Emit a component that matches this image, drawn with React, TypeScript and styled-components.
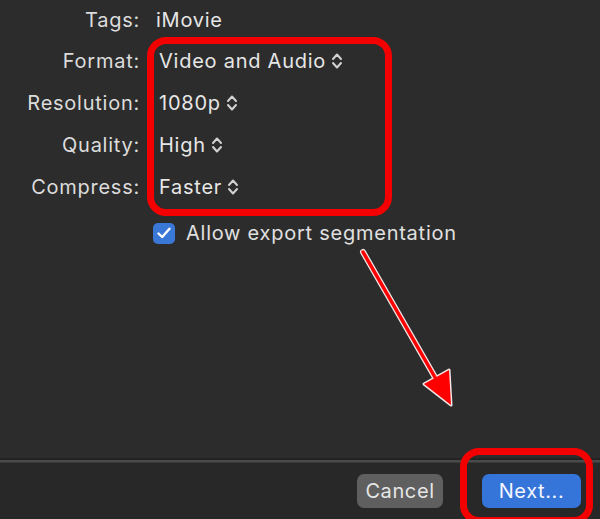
import { Fragment } from 'react';
import styled, { createGlobalStyle } from 'styled-components';

const GlobalStyle = createGlobalStyle`
  html, body {
    margin: 0;
    padding: 0;
    background: #2c2c2c;
  }
  body {
    font-family: Inter, "Liberation Sans", Arial, sans-serif;
  }
`;

const Sheet = styled.div`
  position: relative;
  width: 600px;
  height: 519px;
  overflow: hidden;
  display: flex;
  flex-direction: column;
  background: #2c2c2c;
  color: #e2e2e2;
  font-size: 20px;
  letter-spacing: 0.75px;
`;

const Form = styled.div`
  flex: 1;
  display: grid;
  grid-template-columns: 140px 1fr;
  grid-template-rows: 40px repeat(4, 42px);
  column-gap: 19px;
  align-items: center;
  align-content: start;
`;

const Label = styled.div`
  text-align: right;
  color: #dcdcdc;
`;

const Value = styled.div<{ $shift?: number }>`
  display: flex;
  align-items: center;
  gap: 5px;
  color: #e6e6e6;
  margin-left: ${(p) => p.$shift ?? 0}px;
`;

const CheckRow = styled.label`
  grid-column: 2;
  height: 50px;
  display: flex;
  align-items: center;
  gap: 11px;
  margin-left: -6px;
  color: #e0e0e0;
`;

const Box = styled.span`
  width: 22px;
  height: 21px;
  border-radius: 5px;
  background: #3a78d8;
  display: flex;
  align-items: center;
  justify-content: center;
`;

const Separator = styled.div`
  height: 2px;
  border-top: 2px solid #232323;
  background: #4a4a4a;
  border-bottom: 1px solid #3a3a3a;
`;

const Footer = styled.div`
  height: 56px;
  display: flex;
  align-items: center;
  justify-content: flex-end;
  gap: 39px;
  padding-right: 19px;
  background: #282828;
`;

const Button = styled.button<{ $primary?: boolean }>`
  height: 34px;
  padding: 0;
  width: ${(p) => (p.$primary ? 99 : 86)}px;
  border: none;
  border-radius: 7px;
  font-family: inherit;
  font-size: 20px;
  letter-spacing: 0.6px;
  color: ${(p) => (p.$primary ? '#f4f7ff' : '#e6e6e6')};
  background: ${(p) => (p.$primary ? '#3574d8' : '#5f5f5f')};
`;

const Marker = styled.div<{ $x: number; $y: number; $w: number; $h: number }>`
  position: absolute;
  left: ${(p) => p.$x}px;
  top: ${(p) => p.$y}px;
  width: ${(p) => p.$w}px;
  height: ${(p) => p.$h}px;
  box-sizing: border-box;
  border: 7px solid #f50000;
  border-radius: 19px;
  pointer-events: none;
`;

const Overlay = styled.svg`
  position: absolute;
  left: 0;
  top: 0;
  pointer-events: none;
`;

function UpDown() {
  return (
    <svg width="12" height="18" viewBox="0 0 12 18" fill="none">
      <path
        d="M2 7 L6 2.5 L10 7 M2 11 L6 15.5 L10 11"
        stroke="#d2d2d2"
        strokeWidth="2"
        strokeLinecap="round"
        strokeLinejoin="round"
      />
    </svg>
  );
}

const rows = [
  { label: 'Format:', value: 'Video and Audio' },
  { label: 'Resolution:', value: '1080p' },
  { label: 'Quality:', value: 'High' },
  { label: 'Compress:', value: 'Faster' },
];

export default function App() {
  return (
    <>
      <GlobalStyle />
      <Sheet>
        <Form>
          <Label>Tags:</Label>
          <Value $shift={-3}>iMovie</Value>
          {rows.map((r) => (
            <Fragment key={r.label}>
              <Label>{r.label}</Label>
              <Value>
                {r.value}
                <UpDown />
              </Value>
            </Fragment>
          ))}
          <CheckRow>
            <Box>
              <svg width="14" height="12" viewBox="0 0 14 12" fill="none">
                <path
                  d="M1.5 6.5 L5.2 10 L12.5 1.8"
                  stroke="#fff"
                  strokeWidth="2.4"
                  strokeLinecap="round"
                  strokeLinejoin="round"
                />
              </svg>
            </Box>
            Allow export segmentation
          </CheckRow>
        </Form>
        <Separator />
        <Footer>
          <Button>Cancel</Button>
          <Button $primary>Next...</Button>
        </Footer>

        <Marker $x={147} $y={37} $w={245} $h={179} />
        <Marker $x={460} $y={448} $w={133} $h={76} />
        <Overlay width="600" height="519">
          <line x1="363" y1="252" x2="440" y2="386" stroke="#f2e6e6" strokeWidth="6" strokeLinecap="round" />
          <polygon points="451,405 424,384 449,370" fill="#f2e6e6" stroke="#f2e6e6" strokeWidth="3" strokeLinejoin="round" />
          <line x1="363" y1="252" x2="440" y2="386" stroke="#f00" strokeWidth="3.5" strokeLinecap="round" />
          <polygon points="451,405 424,384 449,370" fill="#f00" />
        </Overlay>
      </Sheet>
    </>
  );
}
